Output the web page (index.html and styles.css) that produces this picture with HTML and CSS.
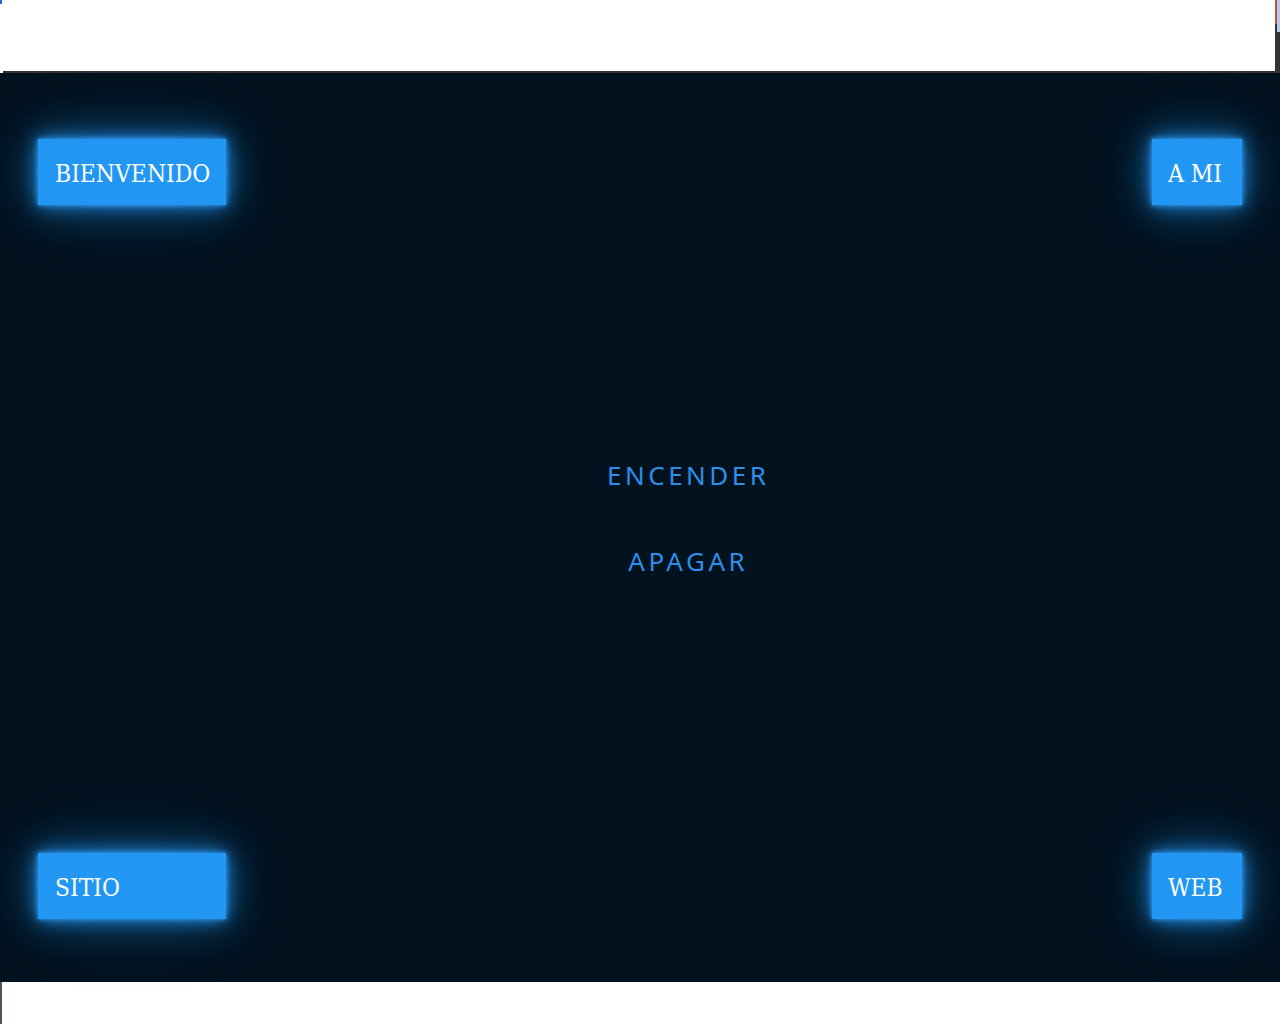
FILE: index.html
```html
<!DOCTYPE html>
<html lang="es">
<head>
<meta charset="utf-8">
<title>Encender</title>
<link rel="stylesheet" href="styles.css">
</head>
<body>
<header class="top">
  <span class="top-mark"></span>
  <span class="top-edge"><span class="edge-red"></span><span class="edge-blue"></span></span>
</header>
<div class="rule"></div>
<main class="panel">
  <a class="btn btn-wide" href="#">BIENVENIDO</a>
  <a class="btn btn-narrow btn-right" href="#">A MI</a>
  <div class="center">
    <a class="switch" href="#">ENCENDER</a>
    <a class="switch" href="#">APAGAR</a>
  </div>
  <a class="btn btn-wide" href="#">SITIO</a>
  <a class="btn btn-narrow btn-right" href="#">WEB</a>
</main>
<footer class="bottom"></footer>
</body>
</html>
```
FILE: styles.css
```css
html, body {
  margin: 0;
  padding: 0;
  background: #ffffff;
}

.top {
  position: relative;
  height: 71px;
  background: #ffffff;
}

.top-mark {
  position: absolute;
  left: 0;
  top: 0;
  width: 2px;
  height: 4px;
  background: #1f6fd0;
}

.top-edge {
  position: absolute;
  right: 0;
  top: 0;
  width: 5px;
  height: 71px;
  background: #333333;
}

.edge-red {
  position: absolute;
  left: 0;
  top: 0;
  width: 2px;
  height: 24px;
  background: #c84a4a;
}

.edge-blue {
  position: absolute;
  left: 2px;
  top: 0;
  width: 3px;
  height: 32px;
  background: #b5cde8;
}

.rule {
  height: 2px;
  margin-left: 3px;
  background: #333333;
}

.panel {
  height: 909px;
  box-sizing: border-box;
  background: #03121f;
  padding: 66px 38px 63px;
  display: grid;
  grid-template-columns: 1fr 1fr;
  grid-template-rows: 66px 1fr 66px;
}

.btn {
  display: flex;
  align-items: center;
  box-sizing: border-box;
  height: 66px;
  padding: 2px 16px 0 17px;
  background: #2196f3;
  color: #ffffff;
  text-decoration: none;
  font-family: "DejaVu Serif", serif;
  font-stretch: condensed;
  font-size: 24.4px;
  box-shadow: 0 0 5px #3aa0f5, 0 0 16px rgba(33, 150, 243, 0.9), 0 0 40px rgba(33, 150, 243, 0.55), 0 0 70px rgba(33, 150, 243, 0.2);
}

.btn-wide {
  width: 188px;
}

.btn-narrow {
  width: 90px;
  padding: 2px 16px 0;
}

.btn-right {
  justify-self: end;
}

.center {
  grid-column: 1 / span 2;
  display: flex;
  flex-direction: column;
  align-items: center;
  justify-content: flex-start;
  padding-left: 93px;
  padding-top: 254px;
  gap: 53px;
}

.switch {
  font-family: "Noto Sans", sans-serif;
  font-size: 26px;
  line-height: 33px;
  letter-spacing: 3.5px;
  color: #2c8fe8;
  text-decoration: none;
  margin-right: -3.5px;
}

.bottom {
  height: 42px;
  background: #ffffff;
  border-left: 2px solid #4a5866;
}
```
